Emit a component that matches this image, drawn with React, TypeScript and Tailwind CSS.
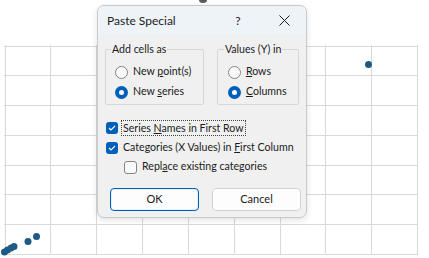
import React from "react";

const FONT = { fontFamily: 'Lato, "Noto Sans", sans-serif' };

const ChartBackdrop: React.FC = () => {
  const cols = Array.from({ length: 10 }, (_, i) => 4.5 + i * 45.85);
  const rows = Array.from({ length: 8 }, (_, i) => 45.5 + i * 29.75);
  return (
    <svg width="429" height="258" className="absolute inset-0">
      {cols.map((x) => (
        <line key={`c${x}`} x1={Math.round(x) + 0.5} y1="45" x2={Math.round(x) + 0.5} y2="254" stroke="#d9d9d9" />
      ))}
      {rows.map((y) => (
        <line key={`r${y}`} x1="4" y1={Math.round(y) + 0.5} x2="418" y2={Math.round(y) + 0.5} stroke="#d9d9d9" />
      ))}
      <ellipse cx="203" cy="0" rx="4" ry="3" fill="#595959" />
      <g fill="#1d5b86">
        <circle cx="368.5" cy="64.5" r="3.5" />
        <circle cx="36.5" cy="236.5" r="3.5" />
        <circle cx="28" cy="241.5" r="3.5" />
        <circle cx="14" cy="246.5" r="3.5" />
        <circle cx="11" cy="248" r="3.5" />
        <circle cx="7.5" cy="250" r="3.5" />
        <circle cx="4.5" cy="252" r="3.5" />
      </g>
    </svg>
  );
};

const Radio: React.FC<{ checked?: boolean; children: React.ReactNode }> = ({ checked, children }) => (
  <div className="flex items-center gap-[5px] h-[20px] whitespace-nowrap">
    {checked ? (
      <span className="w-[13px] h-[13px] rounded-full bg-[#005fb8] flex items-center justify-center shrink-0">
        <span className="w-[5px] h-[5px] rounded-full bg-white" />
      </span>
    ) : (
      <span className="w-[13px] h-[13px] rounded-full border border-[#858585] bg-[#f9f9f9] shrink-0" />
    )}
    <span>{children}</span>
  </div>
);

const Check: React.FC<{ checked?: boolean }> = ({ checked }) =>
  checked ? (
    <span className="w-[12px] h-[12px] rounded-[3px] bg-[#005fb8] flex items-center justify-center shrink-0">
      <svg width="8" height="6" viewBox="0 0 8 6">
        <path d="M1 3 L3 5 L7 1" fill="none" stroke="white" strokeWidth="1.1" />
      </svg>
    </span>
  ) : (
    <span className="w-[13px] h-[13px] rounded-[3px] border border-[#858585] bg-[#f9f9f9] shrink-0" />
  );

export default function App() {
  return (
    <div className="relative w-[429px] h-[258px] bg-white overflow-hidden text-[#1b1b1b]" style={FONT}>
      <ChartBackdrop />

      <div className="absolute left-[97px] top-[5px] w-[210px] h-[213px] rounded-[7px] border border-[#c9c9c9] bg-[#f0f0f0] shadow-[0_2px_6px_rgba(0,0,0,0.12)] overflow-hidden flex flex-col whitespace-nowrap text-[10.6px]">
        <div className="h-[28px] bg-[#eef3f8] flex items-center pl-[9px] pr-[16px] shrink-0 text-[12px]">
          <span className="flex-1 pt-[2px]">Paste Special</span>
          <span className="w-[10px] text-center mr-[36px] pt-[2px]">?</span>
          <svg width="11" height="11" viewBox="0 0 11 11">
            <path d="M0.5 0.5 L10.5 10.5 M10.5 0.5 L0.5 10.5" stroke="#1b1b1b" strokeWidth="1" />
          </svg>
        </div>

        <div className="flex gap-[13px] px-[7px] pt-[8px]">
          <fieldset className="w-[100px] h-[63px] border border-[#d6d6d6] rounded-[2px] pl-[9px]">
            <legend className="ml-[-4px] px-[1px] leading-[14px]">Add cells as</legend>
            <div className="mt-[6px]">
              <Radio>
                New <u>p</u>oint(s)
              </Radio>
              <Radio checked>
                New <u>s</u>eries
              </Radio>
            </div>
          </fieldset>
          <fieldset className="w-[83px] h-[63px] border border-[#d6d6d6] rounded-[2px] pl-[10px]">
            <legend className="ml-[-4px] px-[1px] leading-[14px]">Values (Y) in</legend>
            <div className="mt-[6px]">
              <Radio>
                <u>R</u>ows
              </Radio>
              <Radio checked>
                <u>C</u>olumns
              </Radio>
            </div>
          </fieldset>
        </div>

        <div className="flex flex-col pl-[8px] mt-[13px]">
          <div className="flex items-center gap-[3px] h-[20px]">
            <Check checked />
            <span className="border border-dotted border-[#444] px-[1px] leading-[14px]">
              Series <u>N</u>ames in First Row
            </span>
          </div>
          <div className="flex items-center gap-[5px] h-[20px]">
            <Check checked />
            <span>
              Categories (X Values) in <u>F</u>irst Column
            </span>
          </div>
          <div className="flex items-center gap-[5px] h-[18px] pl-[18px]">
            <Check />
            <span>
              Repl<u>a</u>ce existing categories
            </span>
          </div>
        </div>

        <div className="flex gap-[13px] pl-[12px] mt-[12px] text-[11px]">
          <button className="w-[89px] h-[23px] rounded-[4px] border border-[#005fb8] bg-[#fdfdfd] shadow-[inset_0_0_0_1px_#e6eef7]">
            OK
          </button>
          <button className="w-[89px] h-[23px] rounded-[4px] border border-[#d1d1d1] bg-[#fdfdfd]">Cancel</button>
        </div>
      </div>
    </div>
  );
}
